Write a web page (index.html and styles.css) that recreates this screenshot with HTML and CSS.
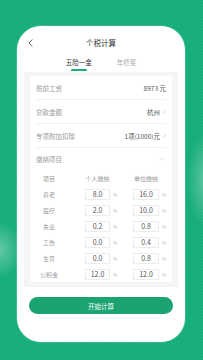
FILE: index.html
```html
<!DOCTYPE html>
<html lang="zh">
<head>
<meta charset="utf-8">
<title>个税计算</title>
<link rel="stylesheet" href="styles.css">
</head>
<body>
<div class="screen">
  <div class="card">
    <div class="header">
      <div class="back">
        <svg width="5" height="8" viewBox="0 0 5 8"><path d="M4.3 0.5 L1 4 L4.3 7.5" fill="none" stroke="#555" stroke-width="0.9"/></svg>
      </div>
      <div class="title">个税计算</div>
      <div></div>
    </div>
    <div class="tabs">
      <div class="tab active"><span>五险一金</span><i class="bar"></i></div>
      <div class="tab"><span>年终奖</span><i class="bar"></i></div>
    </div>
    <div class="panel">
      <div class="rows">
        <div class="row"><span class="label">税前工资</span><span class="value">8973 元</span></div>
        <div class="row"><span class="label">贷款金额</span><span class="value">杭州<svg class="chev" width="3" height="5" viewBox="0 0 3 5"><path d="M0.4 0.4 L2.5 2.5 L0.4 4.6" fill="none" stroke="#bbb" stroke-width="0.6"/></svg></span></div>
        <div class="row"><span class="label">专项附加扣除</span><span class="value">1项(1000)元<svg class="chev" width="3" height="5" viewBox="0 0 3 5"><path d="M0.4 0.4 L2.5 2.5 L0.4 4.6" fill="none" stroke="#bbb" stroke-width="0.6"/></svg></span></div>
        <div class="row short"><span class="label">缴纳项目</span><svg class="up" width="6" height="4" viewBox="0 0 6 4"><path d="M0.4 3.5 L3 1 L5.6 3.5" fill="none" stroke="#ccc" stroke-width="0.6"/></svg></div>
        <div class="table">
          <div class="trow thead"><span class="c1">项目</span><span class="c3">个人缴纳</span><span class="c5">单位缴纳</span></div>
          <div class="trow"><span class="c1">养老</span><span class="box c3">8.0</span><span class="pct">%</span><span class="box c5">16.0</span><span class="pct">%</span></div>
          <div class="trow"><span class="c1">医疗</span><span class="box c3">2.0</span><span class="pct">%</span><span class="box c5">10.0</span><span class="pct">%</span></div>
          <div class="trow"><span class="c1">失业</span><span class="box c3">0.2</span><span class="pct">%</span><span class="box c5">0.8</span><span class="pct">%</span></div>
          <div class="trow"><span class="c1">工伤</span><span class="box c3">0.0</span><span class="pct">%</span><span class="box c5">0.4</span><span class="pct">%</span></div>
          <div class="trow"><span class="c1">生育</span><span class="box c3">0.0</span><span class="pct">%</span><span class="box c5">0.8</span><span class="pct">%</span></div>
          <div class="trow"><span class="c1">公积金</span><span class="box c3">12.0</span><span class="pct">%</span><span class="box c5">12.0</span><span class="pct">%</span></div>
        </div>
      </div>
    </div>
    <div class="button">开始计算</div>
  </div>
</div>
</body>
</html>
```
FILE: styles.css
```css
* { box-sizing: border-box; margin: 0; padding: 0; }
html, body { width: 203px; height: 360px; overflow: hidden; }
body {
  font-family: "Noto Sans CJK SC", "Noto Sans", sans-serif;
  background-color: #18ae79;
  background-image:
    radial-gradient(ellipse 20px 48px at 207px 180px, rgba(255,255,255,0.32), rgba(255,255,255,0) 100%),
    radial-gradient(ellipse 22px 28px at 0px 250px, rgba(255,255,255,0.32), rgba(255,255,255,0) 100%),
    radial-gradient(circle, rgba(255,255,255,0.04) 0.6px, rgba(255,255,255,0) 0.9px);
  background-size: auto, auto, 3px 3px;
}
.screen { padding: 26px 18px 0 17px; }
.card {
  height: 316px;
  background: #fff;
  border-radius: 24px;
  box-shadow: 0 0 0 1px rgba(255,255,255,0.15);
  display: flex;
  flex-direction: column;
}
.header {
  display: grid;
  grid-template-columns: 1fr auto 1fr;
  align-items: center;
  padding-top: 12px;
  height: 22px;
}
.back { padding-left: 11px; display: flex; align-items: center; }
.title { font-size: 7.5px; line-height: 10px; color: #333; }
.tabs { display: flex; justify-content: center; gap: 25px; margin-top: 9px; }
.tab {
  display: flex; flex-direction: column; align-items: center; gap: 2px;
  font-size: 6.5px; line-height: 10px; color: #aaa;
}
.tab.active { color: #333; }
.bar { display: block; width: 16px; height: 2px; background: #18ae79; border-radius: 1px; }
.tab:not(.active) .bar { visibility: hidden; }
.panel { margin: 1px 7px 0; background: #f5f5f5; padding: 4px 6px 5px; }
.rows { background: #fff; }
.row {
  display: flex; justify-content: space-between; align-items: center;
  height: 24px; margin: 0 6px; border-bottom: 1px solid #f2f2f2;
  font-size: 6.5px;
}
.row.short { height: 22px; border-bottom: none; }
.label { color: #9a9a9a; }
.value { color: #555; display: flex; align-items: center; gap: 3px; }
.chev { display: block; }
.up { display: block; margin-right: 1px; }
.trow {
  display: grid;
  grid-template-columns: 38px 17px 25px 23px 26px 1fr;
  height: 16px; align-items: center;
  font-size: 6px; color: #9a9a9a;
}
.c1 { grid-column: 1; text-align: center; }
.c3 { grid-column: 3; justify-self: center; white-space: nowrap; }
.c5 { grid-column: 5; justify-self: center; white-space: nowrap; }
.box {
  justify-self: stretch;
  height: 11px; border: 1px solid #ececec;
  display: flex; align-items: center; justify-content: center;
  font-size: 7px; color: #555;
}
.pct { font-size: 5px; color: #bbb; padding-left: 3px; }
.button {
  margin: 10px 12px 0; height: 17px; border-radius: 9px;
  background: #1ba372; color: #fff; font-size: 6.5px;
  display: flex; align-items: center; justify-content: center;
}
```
